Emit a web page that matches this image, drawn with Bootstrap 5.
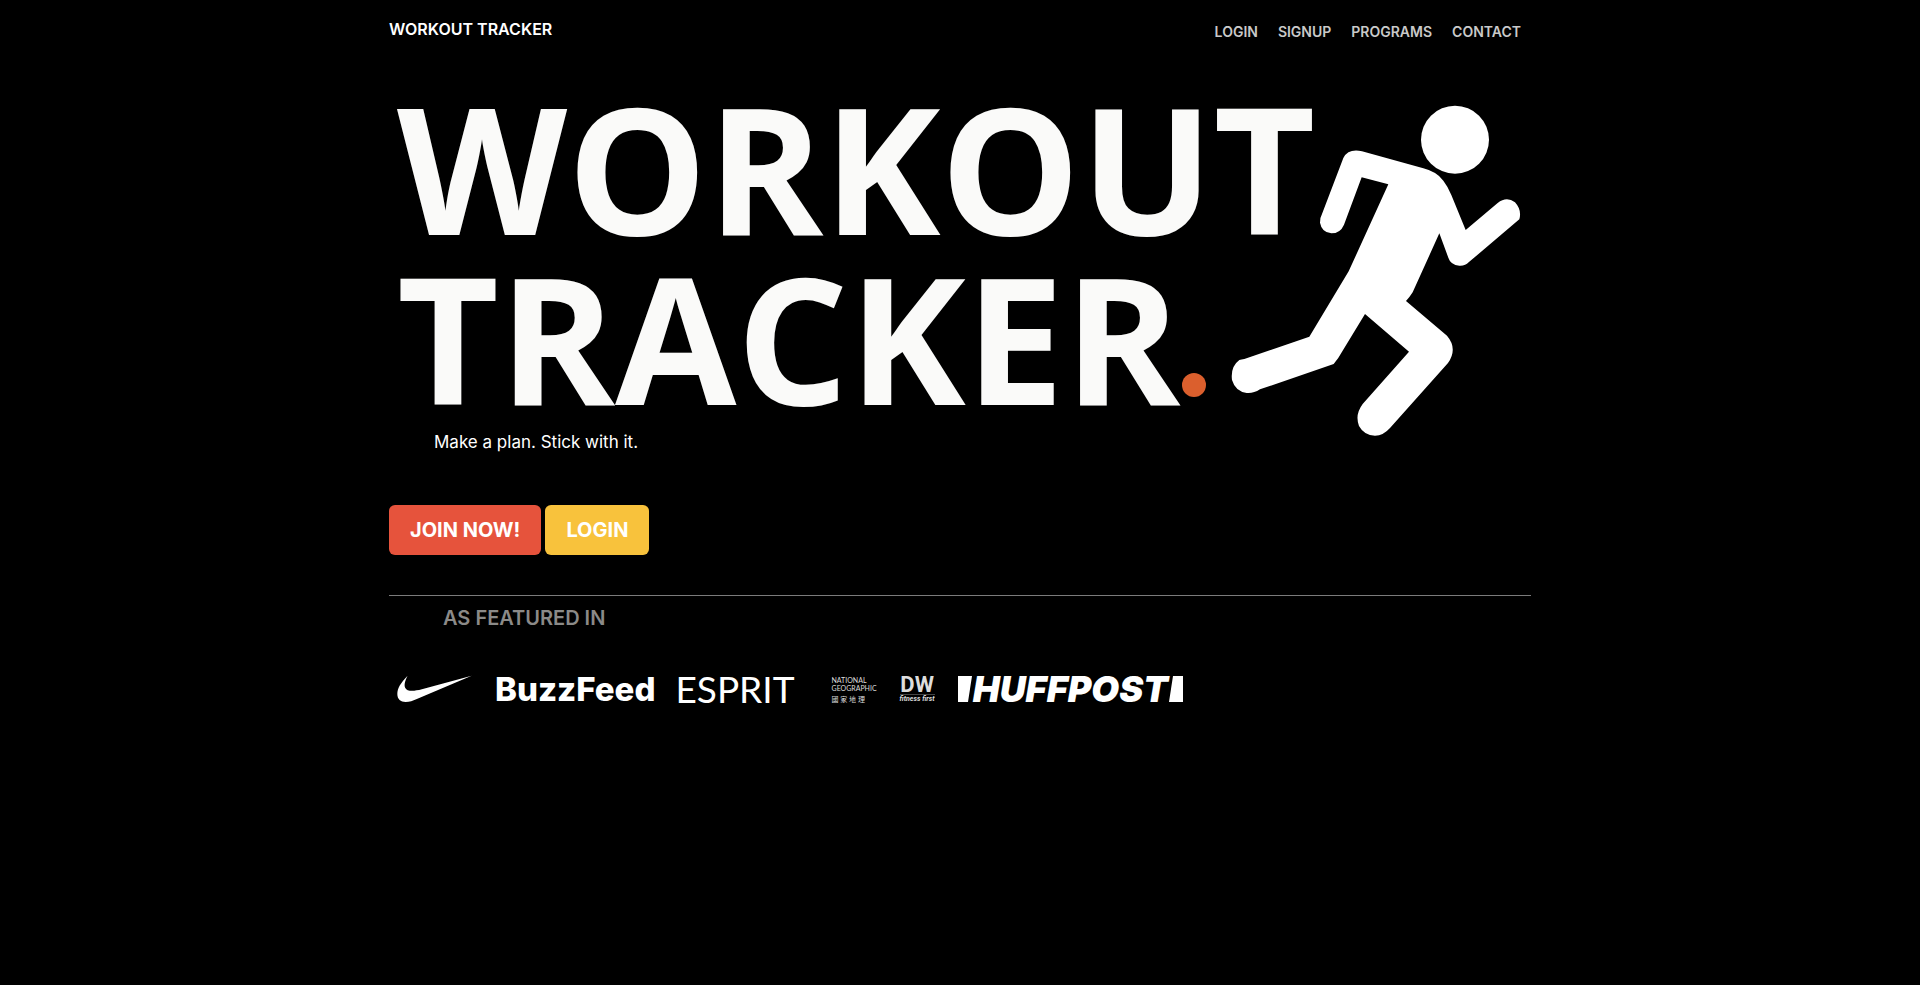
<!DOCTYPE html>
<html lang="en">
<head>
<meta charset="utf-8">
<meta name="viewport" content="width=device-width, initial-scale=1">
<title>Workout Tracker</title>
<link rel="stylesheet" href="https://cdn.jsdelivr.net/npm/bootstrap@5.3.0/dist/css/bootstrap.min.css">
<style>
body { background: #000; color: #fff; font-family: Inter, sans-serif; }
.page-wrap { max-width: 1142px; }
.site-top { padding-top: 17px; min-height: 82px; }
.brand-link { font-size: 16px; line-height: 24px; font-weight: 600; color: #fff; }
.site-links { gap: 20px; margin-top: 5px; padding-right: 10px; }
.site-links .nav-link { padding: 0; font-size: 14px; line-height: 20px; font-weight: 600; color: #c9c9c9; }
.hero { display: grid; }
.hero > * { grid-area: 1 / 1; }
.hero-title { font: 700 176px/170px "Open Sans", sans-serif; color: #fafaf9; padding-left: 8px; }
.hero-dot { display: inline-block; width: 24px; height: 24px; margin: 0 0 8px 2px; border-radius: 50%; background: #db5f2d; }
.runner { width: 292px; height: 332px; margin: 23px 9px 0 0; justify-self: end; }
.tagline { font-size: 17px; line-height: 24px; margin-top: -7px; padding-left: 45px; }
.cta-row { gap: 4px; margin-top: 51px; }
.btn-cta { height: 50px; padding: 0 21px; border: 0; border-radius: 6px; font-size: 20px; font-weight: 700; color: #fff; }
.btn-join { background: #e6533c; }
.btn-login { background: #f8c23c; }
.divider { margin: 40px 0 0; border-top: 1px solid #7b7b7b; opacity: 1; }
.featured-title { font-size: 20px; line-height: 30px; font-weight: 600; color: #8b8a88; margin-top: 7px; padding-left: 54px; }
.press { gap: 23px; margin-top: 42px; padding-left: 8px; line-height: 28px; white-space: nowrap; }
.press > * { height: 28px; }
.buzz { font-size: 33px; font-weight: 800; }
.esprit { font: 400 37px/28px Lato, sans-serif; margin-left: -3px; }
.natgeo { font: 400 7px/8px Lato, "Noto Sans CJK TC", sans-serif; color: #ddd; margin-left: 14px; padding-top: 1px; }
.natgeo span { line-height: 14px; }
.dw { font: 700 22px/19px Roboto, sans-serif; color: #ddd; text-align: center; }
.dw small { font-size: 7px; line-height: 8px; font-style: italic; display: block; border-top: 1px solid #444; }
.huff { font-size: 36px; font-weight: 900; font-style: italic; }
@media (max-width: 1150px) {
  .hero-title { font-size: 14vw; line-height: 1; }
  .hero-dot { width: 2vw; height: 2vw; margin-bottom: 0; }
  .runner { grid-area: 2 / 1; }
  .tagline { margin-top: 8px; }
}
</style>
</head>
<body>
<div class="page-wrap mx-auto">
  <header class="site-top d-flex justify-content-between align-items-start">
    <a class="brand-link text-decoration-none" href="#">WORKOUT TRACKER</a>
    <nav>
      <ul class="site-links nav">
        <li><a class="nav-link" href="#">LOGIN</a></li>
        <li><a class="nav-link" href="#">SIGNUP</a></li>
        <li><a class="nav-link" href="#">PROGRAMS</a></li>
        <li><a class="nav-link" href="#">CONTACT</a></li>
      </ul>
    </nav>
  </header>
  <main>
    <section class="hero">
      <h1 class="hero-title mb-0">WORKOUT<br>TRACKER<span class="hero-dot"></span></h1>
      <svg class="runner" viewBox="60 45 876 996" fill="#fff" aria-hidden="true">
        <circle cx="735" cy="149" r="102"/>
        <path d="M456 184 L640 235 Q680 245 700 272 Q714 290 724 315 L767 420 L863 339 Q890 318 915 337 Q936 360 928 388 L776 517 Q766 528 748 527 Q722 525 715 503 L688 430 L608 607 Q600 620 588 633 L711 737 Q744 776 714 819 L540 1014 Q520 1037 495 1037 Q462 1036 447 1008 Q434 974 458 942 L597 785 L465 672 L397 784 Q387 803 371 822 L150 898 Q130 911 110 909 Q76 904 66 870 Q61 830 88 810 Q94 808 103 807 L298 740 L416 544 L535 283 L455 262 L402 404 Q391 430 364 430 Q335 427 330 398 Q330 382 336 372 L400 204 Q415 175 456 184Z"/>
      </svg>
    </section>
    <p class="tagline mb-0">Make a plan. Stick with it.</p>
    <div class="cta-row d-flex">
      <button type="button" class="btn btn-cta btn-join">JOIN NOW!</button>
      <button type="button" class="btn btn-cta btn-login">LOGIN</button>
    </div>
    <hr class="divider">
    <h2 class="featured-title mb-0">AS FEATURED IN</h2>
    <div class="press d-flex flex-wrap">
      <svg width="75" viewBox="50 50 226 82" fill="#fff" role="img" aria-label="Nike"><path d="M82 51C60 74 51 89 51 106C51 122 61 130 76 130C88 130 98 127 108 122L275 51L125 92C98 99 80 98 75 88C71 80 73 68 82 51Z"/></svg>
      <div class="buzz">BuzzFeed</div>
      <div class="esprit">ESPRIT</div>
      <div class="natgeo">NATIONAL<br>GEOGRAPHIC<br><span>國 家 地 理</span></div>
      <div class="dw">DW<small>fitness first</small></div>
      <div class="d-flex">
        <svg width="15" height="28" viewBox="0 0 15 28" fill="#fff" aria-hidden="true"><path d="M0 1H14L10 27H0Z"/></svg>
        <div class="huff">HUFFPOST</div>
        <svg width="15" height="28" viewBox="0 0 15 28" fill="#fff" aria-hidden="true"><path d="M5 1H15V27H1Z"/></svg>
      </div>
    </div>
  </main>
</div>
<script src="https://cdn.jsdelivr.net/npm/bootstrap@5.3.0/dist/js/bootstrap.bundle.min.js"></script>
</body>
</html>
